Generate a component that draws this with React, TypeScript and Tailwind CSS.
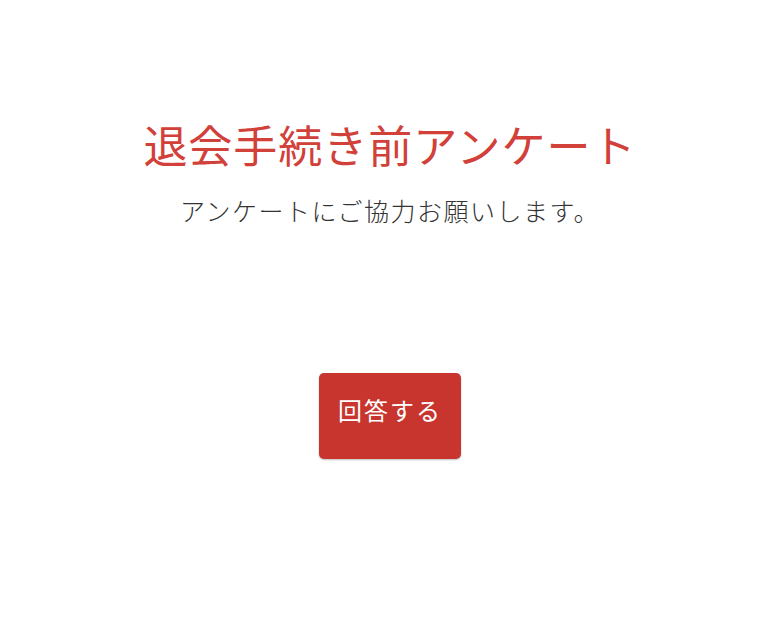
export default function App() {
  return (
    <div
      className="min-h-[636px] w-full bg-white flex flex-col items-center"
      style={{ fontFamily: '"Noto Sans CJK JP", "Noto Sans", sans-serif' }}
    >
      <h1 className="mt-[118px] h-[52px] leading-[52px] text-[44px] tracking-[1px] font-normal text-[#d2403a]">
        退会手続き前アンケート
      </h1>
      <p className="mt-[24px] h-[32px] leading-[32px] text-[25px] tracking-[1.5px] font-light text-[#333333]">
        アンケートにご協力お願いします。
      </p>
      <button className="mt-[147px] w-[142px] h-[86px] pb-[12px] rounded-[5px] bg-[#c7352e] text-white text-[24px] tracking-[2px] shadow-[0_1px_2px_rgba(0,0,0,0.25)]">
        回答する
      </button>
    </div>
  );
}
